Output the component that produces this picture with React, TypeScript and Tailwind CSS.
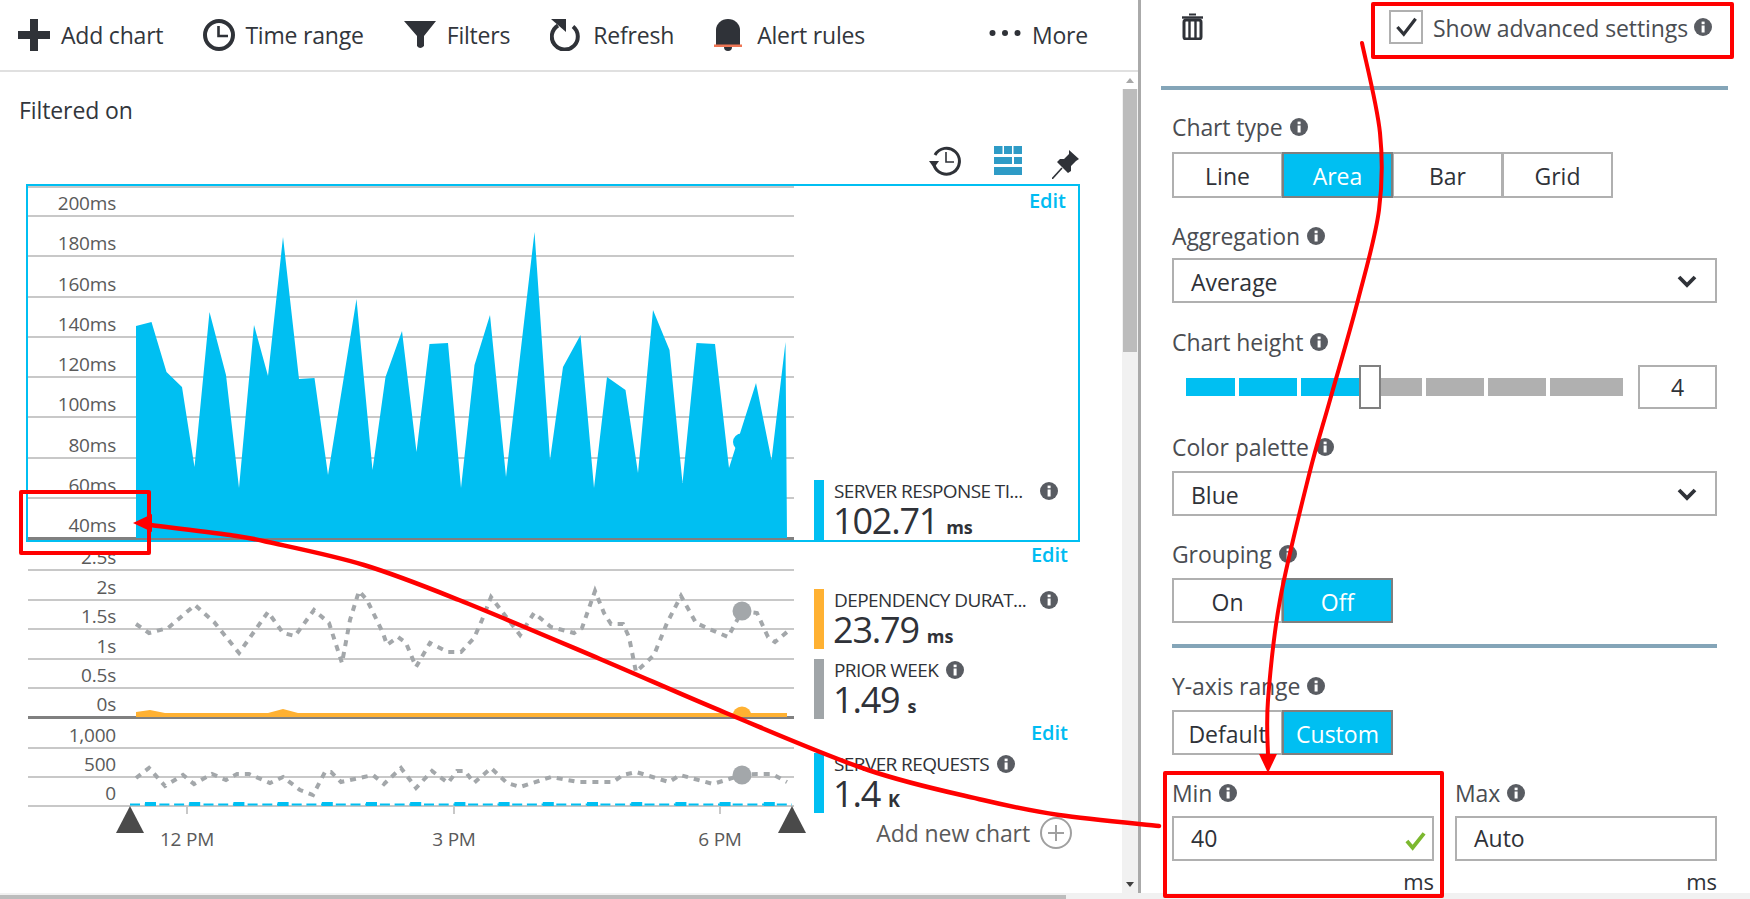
import type { ReactNode } from "react";

type Pt = [number, number];

const AREA: Pt[] = [
  [136, 326], [151.5, 322], [166.5, 372], [182, 387], [194.5, 467], [209.5, 312], [226, 375], [239, 488],
  [254, 325], [268, 376], [283, 237], [299, 379], [314.5, 378], [328, 475], [356.5, 299], [372.5, 470],
  [385.5, 377], [402, 331], [416.5, 452], [429.5, 344], [448, 343], [461, 488], [474.5, 365], [490, 315],
  [506, 477], [534.5, 232], [550, 460], [563, 367], [580.5, 335], [594, 488], [607, 377], [625.5, 390],
  [638, 473], [653, 310], [669.5, 350], [682.5, 483], [696.5, 343], [715, 344], [729, 468], [756, 383],
  [771.5, 460], [785.5, 342], [787, 538], [136, 538],
];

const DEPENDENCY_PRIOR: Pt[] = [
  [136, 624], [149, 633], [168, 628], [195, 605], [214, 622], [239, 653], [268, 612], [283, 633], [295, 636],
  [314, 610], [329, 623], [342, 663], [350, 620], [359, 591], [367, 600], [383, 633], [387, 645], [398, 637],
  [406, 643], [416, 667], [430, 643], [448, 652], [461, 652], [474, 638], [482, 620], [491, 597], [520, 635],
  [534, 613], [551, 627], [574, 633], [582, 628], [595, 591], [604, 613], [611, 624], [623, 624], [629, 637],
  [636, 672], [654, 655], [667, 623], [681, 596], [696, 623], [707, 628], [728, 637], [742, 611], [757, 613],
  [768, 637], [775, 642], [787, 632],
];

const REQUESTS_PRIOR: Pt[] = [
  [136, 778], [149, 768], [165, 786], [183, 775], [194, 784], [212, 774], [226, 780], [237, 774], [249, 774],
  [270, 783], [283, 777], [300, 790], [313, 795], [325, 772], [331, 772], [341, 782], [373, 775], [384, 784],
  [401, 768], [416, 788], [432, 771], [448, 783], [457, 771], [465, 771], [474, 783], [491, 768], [507, 783],
  [520, 787], [551, 777], [578, 782], [600, 782], [613, 782], [623, 775], [636, 772], [669, 782], [680, 775],
  [713, 784], [742, 775], [757, 774], [772, 774], [787, 782],
];

const ORANGE: Pt[] = [
  [136, 717], [136, 712], [150, 710], [165, 713], [268, 713], [283, 709], [298, 713], [787, 713], [787, 717],
];

const toLine = (pts: Pt[]) => pts.map((p) => p.join(",")).join(" ");

// catmull-rom through the points, for the hand drawn arrows
function smooth(pts: Pt[]) {
  let d = `M${pts[0][0]} ${pts[0][1]}`;
  for (let i = 0; i < pts.length - 1; i++) {
    const p0 = pts[Math.max(i - 1, 0)];
    const p1 = pts[i];
    const p2 = pts[i + 1];
    const p3 = pts[Math.min(i + 2, pts.length - 1)];
    d += ` C${p1[0] + (p2[0] - p0[0]) / 6} ${p1[1] + (p2[1] - p0[1]) / 6} ${p2[0] - (p3[0] - p1[0]) / 6} ${p2[1] - (p3[1] - p1[1]) / 6} ${p2[0]} ${p2[1]}`;
  }
  return d;
}

function Info({ className = "" }: { className?: string }) {
  return (
    <svg viewBox="0 0 18 18" className={`w-[18px] h-[18px] shrink-0 ${className}`}>
      <circle cx="9" cy="9" r="9" fill="#595c62" />
      <rect x="7.6" y="7.5" width="3" height="7" fill="#fff" />
      <rect x="7.6" y="3.6" width="3" height="2.6" fill="#fff" />
    </svg>
  );
}

function Chevron() {
  return (
    <svg viewBox="0 0 20 14" className="w-[20px] h-[14px] text-[#2f3238]">
      <path d="M2 3l8 8 8-8" fill="none" stroke="currentColor" strokeWidth="3.8" />
    </svg>
  );
}

function ToolItem({ icon, label }: { icon: ReactNode; label: string }) {
  return (
    <div className="flex items-center">
      {icon}
      <span className="text-[23px] leading-[30px] tracking-[-0.2px]">{label}</span>
    </div>
  );
}

function Toolbar() {
  return (
    <div className="h-[72px] border-b-2 border-[#e0e0e0] flex items-center pl-[18px] pr-[50px] text-[#32363c]">
      <div className="flex items-center gap-[40px]">
        <ToolItem
          label="Add chart"
          icon={
            <svg viewBox="0 0 32 32" className="w-[32px] h-[32px] mr-[11px]" fill="#2f3238">
              <rect x="12" y="0" width="8" height="32" />
              <rect x="0" y="12" width="32" height="8" />
            </svg>
          }
        />
        <ToolItem
          label="Time range"
          icon={
            <svg viewBox="0 0 32 32" className="w-[32px] h-[32px] mr-[10px]" fill="none" stroke="#2f3238">
              <circle cx="16" cy="16" r="14" strokeWidth="4" />
              <path d="M15.5 7v10H25" strokeWidth="2.6" />
            </svg>
          }
        />
        <ToolItem
          label="Filters"
          icon={
            <svg viewBox="0 0 32 28" className="w-[32px] h-[28px] mr-[11px]" fill="#2f3238">
              <path d="M0 0h32L20 15v10q-4 4-7 0V15z" />
            </svg>
          }
        />
        <ToolItem
          label="Refresh"
          icon={
            <svg viewBox="0 0 32 32" className="w-[32px] h-[32px] mr-[11px]" fill="none" stroke="#2f3238">
              <path d="M23 7.5A13 13 0 1 1 8 6.5" strokeWidth="4" />
              <path d="M1 0h15v13z" fill="#2f3238" stroke="none" />
            </svg>
          }
        />
        <ToolItem
          label="Alert rules"
          icon={
            <svg viewBox="0 0 28 32" className="w-[28px] h-[32px] mr-[15px]" fill="#2f3238">
              <path d="M2 26V11a12 11 0 0 1 24 0v15z" />
              <circle cx="14" cy="28" r="4" />
              <rect x="0" y="25.5" width="28" height="2.5" fill="#ee7655" />
            </svg>
          }
        />
      </div>
      <div className="ml-auto">
        <ToolItem
          label="More"
          icon={
            <svg viewBox="0 0 32 8" className="w-[32px] h-[8px] mr-[11px] -mt-[4px]" fill="#2f3238">
              <circle cx="3.5" cy="4" r="3" />
              <circle cx="16" cy="4" r="3" />
              <circle cx="28.5" cy="4" r="3" />
            </svg>
          }
        />
      </div>
    </div>
  );
}

function ViewIcons() {
  return (
    <div className="flex justify-end items-start h-[38px] mt-[21px] pr-[42px]">
      <svg viewBox="0 0 32 30" className="w-[32px] h-[30px]" fill="none" stroke="#2f3238">
        <path d="M5 19A13 13 0 1 0 6 9" strokeWidth="3" />
        <path d="M0 15h10l-5 7z" fill="#2f3238" stroke="none" />
        <path d="M17 6v10h8" strokeWidth="1.6" />
      </svg>
      <svg viewBox="0 0 28 29" className="w-[28px] h-[29px] ml-[33px]" fill="#2e9bc6">
        <rect x="0" y="0" width="8.5" height="8" />
        <rect x="10" y="0" width="8" height="8" />
        <rect x="19.5" y="0" width="8.5" height="8" />
        <rect x="0" y="11" width="18" height="7" />
        <rect x="20" y="11" width="8" height="7" />
        <rect x="0" y="21" width="28" height="8" />
      </svg>
      <svg viewBox="0 0 28 29" className="w-[28px] h-[29px] ml-[30px] mt-[4px]" fill="#2f3238">
        <path d="M17 0l10 9-3 2-5 5v5l-3 2L5 12l3-3h4l5-5z" />
        <path d="M0 29l10-11" stroke="#2f3238" strokeWidth="1.6" />
      </svg>
    </div>
  );
}

function Legend({
  color,
  label,
  value,
  unit,
  labelClass,
  infoClass = "",
}: {
  color: string;
  label: string;
  value: string;
  unit: string;
  labelClass: string;
  infoClass?: string;
}) {
  return (
    <div className="flex h-[60px] text-[#2f3238]">
      <div className={`w-[10px] ${color}`} />
      <div className="pl-[10px]">
        <div className="flex items-center h-[22px]">
          <span className={`text-[19px] leading-[22px] whitespace-nowrap tracking-[-0.6px] ${labelClass}`}>{label}</span>
          <Info className={infoClass} />
        </div>
        <div className="flex items-baseline leading-[38px] -ml-[1px]">
          <span className="text-[36px] font-medium tracking-[-1.2px]">{value}</span>
          <span className="text-[18px] font-bold ml-[8px]">{unit}</span>
        </div>
      </div>
    </div>
  );
}

function Edit() {
  return <div className="text-right text-[20px] leading-[24px] font-semibold text-[#00bcf2] pr-[12px]">Edit</div>;
}

function TickRow({ label, className }: { label: string; className: string }) {
  return (
    <div className={`flex items-end border-b-2 ${className}`}>
      <span className="w-[88px] text-right text-[19px] leading-[24px] tracking-[-0.2px] text-[#5a5a5a]">{label}</span>
    </div>
  );
}

function ResponseChart() {
  return (
    <div className="ml-[26px] w-[1054px] h-[358px] border-2 border-[#00bff2] flex">
      <div className="relative w-[766px] h-[354px]">
        <div className="h-[31px] flex items-end border-t-2 border-b-2 border-[#c8c8c8]">
          <span className="w-[88px] text-right text-[19px] leading-[24px] tracking-[-0.2px] text-[#5a5a5a]">200ms</span>
        </div>
        <TickRow label="180ms" className="h-[40.3px] border-[#c8c8c8]" />
        <TickRow label="160ms" className="h-[40.3px] border-[#c8c8c8]" />
        <TickRow label="140ms" className="h-[40.3px] border-[#c8c8c8]" />
        <TickRow label="120ms" className="h-[40.3px] border-[#c8c8c8]" />
        <TickRow label="100ms" className="h-[40.3px] border-[#c8c8c8]" />
        <TickRow label="80ms" className="h-[40.3px] border-[#c8c8c8]" />
        <TickRow label="60ms" className="h-[40.3px] border-[#c8c8c8]" />
        <TickRow label="40ms" className="h-[41px] border-b-[3px] border-[#808080]" />
        <svg viewBox="28 186 766 354" className="absolute inset-0 w-[766px] h-[354px]">
          <polygon points={toLine(AREA)} fill="#00bff2" />
          <circle cx="741.5" cy="442" r="8.5" fill="#00bff2" />
        </svg>
      </div>
      <div className="flex-1 flex flex-col justify-between pl-[20px] pt-[3px]">
        <Edit />
        <Legend
          color="bg-[#00bff2]"
          label="SERVER RESPONSE TI..."
          value="102.71"
          unit="ms"
          labelClass="w-[206px]"
        />
      </div>
    </div>
  );
}

function DependencyChart() {
  return (
    <div className="ml-[28px] w-[1052px] flex h-[177px]">
      <div className="relative w-[766px] h-[177px]">
        <TickRow label="2.5s" className="h-[29px] border-[#c8c8c8]" />
        <TickRow label="2s" className="h-[29.5px] border-[#c8c8c8]" />
        <TickRow label="1.5s" className="h-[29.5px] border-[#c8c8c8]" />
        <TickRow label="1s" className="h-[29.5px] border-[#c8c8c8]" />
        <TickRow label="0.5s" className="h-[29.5px] border-[#c8c8c8]" />
        <TickRow label="0s" className="h-[30px] border-b-[3px] border-[#808080]" />
        <svg viewBox="28 542 766 177" className="absolute inset-0 w-[766px] h-[177px]">
          <polyline points={toLine(DEPENDENCY_PRIOR)} fill="none" stroke="#a3a7aa" strokeWidth="4" strokeDasharray="6 6" />
          <circle cx="742" cy="611" r="9.5" fill="#a3a7aa" />
          <polygon points={toLine(ORANGE)} fill="#ffb132" />
          <path d="M732.5 716a9.5 9.5 0 0 1 19 0z" fill="#ffb132" />
        </svg>
      </div>
      <div className="flex-1 pl-[20px] pt-[1px]">
        <Edit />
        <div className="flex flex-col gap-[10px] mt-[22px]">
          <Legend
            color="bg-[#ffb132]"
            label="DEPENDENCY DURAT..."
            value="23.79"
            unit="ms"
            labelClass="w-[206px]"
          />
          <Legend
            color="bg-[#a0a5a8]"
            label="PRIOR WEEK"
            value="1.49"
            unit="s"
            labelClass=""
            infoClass="ml-[8px]"
          />
        </div>
      </div>
    </div>
  );
}

function RequestsChart() {
  return (
    <div className="ml-[28px] w-[1052px] flex h-[130px]">
      <div className="relative w-[766px] h-[130px]">
        <TickRow label="1,000" className="h-[30px] border-[#c8c8c8]" />
        <TickRow label="500" className="h-[29px] border-[#c8c8c8]" />
        <TickRow label="0" className="h-[29px] border-[#c8c8c8]" />
        <svg viewBox="28 719 790 130" className="absolute top-0 left-0 w-[790px] h-[130px]">
          <polyline points={toLine(REQUESTS_PRIOR)} fill="none" stroke="#a3a7aa" strokeWidth="4" strokeDasharray="6 6" />
          <circle cx="742" cy="775" r="9.5" fill="#a3a7aa" />
          <path d="M130 804.5H792" stroke="#00bff2" strokeWidth="2" strokeDasharray="10 4.7" />
          {Array.from({ length: 15 }, (_, i) => (
            <rect key={i} x={145 + i * 44.2} y={802} width={11} height={4} fill="#00bff2" />
          ))}
          <path d="M187 807v7M454 807v7M720 807v7" stroke="#c8c8c8" strokeWidth="2" />
          <polygon points="130,806 116,833 144,833" fill="#4a4a4a" />
          <polygon points="792,806 778,833 806,833" fill="#4a4a4a" />
        </svg>
        <span className="absolute left-[159px] top-[108px] -translate-x-1/2 text-[19px] leading-[24px] tracking-[-0.2px] text-[#5a5a5a]">12 PM</span>
        <span className="absolute left-[426px] top-[108px] -translate-x-1/2 text-[19px] leading-[24px] tracking-[-0.2px] text-[#5a5a5a]">3 PM</span>
        <span className="absolute left-[692px] top-[108px] -translate-x-1/2 text-[19px] leading-[24px] tracking-[-0.2px] text-[#5a5a5a]">6 PM</span>
      </div>
      <div className="flex-1 pl-[20px] pt-[2px]">
        <Edit />
        <div className="mt-[8px]">
          <Legend
            color="bg-[#00bff2]"
            label="SERVER REQUESTS"
            value="1.4"
            unit="K"
            labelClass=""
            infoClass="ml-[8px]"
          />
        </div>
        <div className="flex items-center justify-end mt-[4px] pr-[8px] h-[32px] text-[#5a5a5a]">
          <span className="text-[23px] font-medium leading-[30px] tracking-[-0.1px]">Add new chart</span>
          <svg viewBox="0 0 32 32" className="w-[32px] h-[32px] ml-[10px]" fill="none" stroke="#a0a0a0" strokeWidth="2">
            <circle cx="16" cy="16" r="15" />
            <path d="M16 8v16M8 16h16" />
          </svg>
        </div>
      </div>
    </div>
  );
}

function VerticalScrollbar() {
  return (
    <div className="w-[16px] bg-[#f1f1f1] flex flex-col items-center">
      <div className="h-[17px] w-full bg-white flex items-center justify-center">
        <svg viewBox="0 0 8 5" className="w-[8px] h-[5px]" fill="#a8a8a8">
          <path d="M4 0l4 5H0z" />
        </svg>
      </div>
      <div className="w-[14px] h-[263px] bg-[#bcbcbc]" />
      <div className="mt-auto h-[18px] flex items-center justify-center">
        <svg viewBox="0 0 8 5" className="w-[8px] h-[5px]" fill="#404040">
          <path d="M4 5l4-5H0z" />
        </svg>
      </div>
    </div>
  );
}

function Label({ text, className }: { text: string; className: string }) {
  return (
    <div className={`flex items-center h-[30px] gap-[7px] text-[#4a4d52] ${className}`}>
      <span className="text-[23px] leading-[30px] tracking-[-0.1px]">{text}</span>
      <Info />
    </div>
  );
}

function Segmented({ options, active, className, height }: { options: string[]; active: string; className: string; height: string }) {
  return (
    <div className={`flex ${className}`}>
      {options.map((o, i) => (
        <div
          key={o}
          className={`w-[111px] ${height} pt-[3px] flex items-center justify-center text-[23px] border-2 ${i > 0 ? "-ml-[1px]" : ""} ${
            o === active ? "relative bg-[#00bff2] border-[#7f7f7f] text-white" : "border-[#b0b0b0] text-[#2f3238]"
          }`}
        >
          {o}
        </div>
      ))}
    </div>
  );
}

function SelectBox({ value, className }: { value: string; className: string }) {
  return (
    <div className={`h-[45px] border-2 border-[#b0b0b0] flex items-center justify-between pl-[17px] pr-[18px] text-[23px] text-[#2f3238] ${className}`}>
      <span className="pt-[3px]">{value}</span>
      <Chevron />
    </div>
  );
}

function RangeField({ label, value, check, className }: { label: string; value: string; check?: boolean; className: string }) {
  return (
    <div className={`w-[262px] ${className}`}>
      <Label text={label} className="" />
      <div className="mt-[8px] h-[45px] border-2 border-[#b0b0b0] flex items-center justify-between pl-[17px] pr-[6px] text-[23px] text-[#2f3238]">
        <span>{value}</span>
        {check && (
          <svg viewBox="0 0 22 20" className="w-[21px] h-[20px] mt-[4px]" fill="none" stroke="#7cb82f" strokeWidth="4">
            <path d="M2 10l6 7L20 2" />
          </svg>
        )}
      </div>
      <div className="mt-[5px] h-[30px] text-right text-[22px] leading-[30px] text-[#2f3238]">ms</div>
    </div>
  );
}

function SettingsPanel() {
  return (
    <div className="w-[609px] pl-[31px]">
      <div className="h-[86px] flex items-start">
        <svg viewBox="0 0 21 27" className="w-[21px] h-[27px] ml-[10px] mt-[13px]" fill="none" stroke="#2f3238">
          <path d="M0 4.5h21" strokeWidth="2.4" />
          <path d="M7 1.5h7" strokeWidth="2" />
          <rect x="2" y="7" width="17" height="19" rx="2" strokeWidth="3" />
          <path d="M7.5 8v17M13.5 8v17" strokeWidth="2.4" />
        </svg>
        <div className="ml-[186px] mt-[10px] w-[34px] h-[34px] border-2 border-[#b0b0b0] flex items-center justify-center">
          <svg viewBox="0 0 24 22" className="w-[23px] h-[20px]" fill="none" stroke="#2f3238" strokeWidth="3.6">
            <path d="M2 11l7 8L22 2" />
          </svg>
        </div>
        <span className="ml-[10px] mt-[13px] text-[23px] leading-[30px] tracking-[-0.1px] text-[#4a4d52] whitespace-nowrap">Show advanced settings</span>
        <Info className="ml-[6px] mt-[18px]" />
      </div>
      <div className="h-[4px] w-[567px] -ml-[11px] bg-[#84a5b8]" />
      <div className="w-[545px]">
        <Label text="Chart type" className="mt-[22px]" />
        <Segmented options={["Line", "Area", "Bar", "Grid"]} active="Area" height="h-[46px]" className="mt-[10px]" />
        <Label text="Aggregation" className="mt-[23px]" />
        <SelectBox value="Average" className="mt-[7px]" />
        <Label text="Chart height" className="mt-[24px]" />
        <div className="mt-[8px] h-[44px] flex items-center">
          <div className="ml-[14px] w-[49px] h-[18px] bg-[#00bff2]" />
          <div className="ml-[4px] w-[58px] h-[18px] bg-[#00bff2]" />
          <div className="ml-[4px] w-[58px] h-[18px] bg-[#00bff2]" />
          <div className="w-[22px] h-[44px] border-2 border-[#808080] bg-white" />
          <div className="w-[41px] h-[18px] bg-[#b0b0b0]" />
          <div className="ml-[4px] w-[58px] h-[18px] bg-[#b0b0b0]" />
          <div className="ml-[4px] w-[58px] h-[18px] bg-[#b0b0b0]" />
          <div className="ml-[4px] w-[73px] h-[18px] bg-[#b0b0b0]" />
          <div className="ml-[15px] w-[79px] h-[44px] border-2 border-[#b0b0b0] flex items-center justify-center text-[23px] text-[#2f3238]">4</div>
        </div>
        <Label text="Color palette" className="mt-[23px]" />
        <SelectBox value="Blue" className="mt-[9px]" />
        <Label text="Grouping" className="mt-[23px]" />
        <Segmented options={["On", "Off"]} active="Off" height="h-[45px]" className="mt-[9px]" />
        <div className="mt-[21px] h-[4px] bg-[#84a5b8]" />
        <Label text="Y-axis range" className="mt-[23px]" />
        <Segmented options={["Default", "Custom"]} active="Custom" height="h-[45px]" className="mt-[9px]" />
        <div className="flex gap-[21px]">
          <RangeField label="Min" value="40" check className="mt-[23px]" />
          <RangeField label="Max" value="Auto" className="mt-[23px]" />
        </div>
      </div>
    </div>
  );
}

function Annotations() {
  const toMin: Pt[] = [[1362, 43], [1380, 133], [1379, 210], [1358, 300], [1330, 400], [1309, 475], [1280, 600], [1268, 700], [1268, 756]];
  const toAxis: Pt[] = [[1159, 826], [1059, 815], [983, 800], [868, 770], [726, 713], [600, 659], [459, 600], [364, 565], [268, 542], [230, 535], [150, 525]];
  return (
    <>
      <div className="absolute left-[1371px] top-[2px] w-[363px] h-[57px] border-4 border-[#ff0000] rounded-[2px]" />
      <div className="absolute left-[19px] top-[490px] w-[132px] h-[65px] border-4 border-[#ff0000] rounded-[2px]" />
      <div className="absolute left-[1163px] top-[771px] w-[281px] h-[127px] border-4 border-[#ff0000] rounded-[2px]" />
      <svg viewBox="0 0 1750 899" className="absolute inset-0 w-[1750px] h-[899px] pointer-events-none">
        <path d={smooth(toMin)} fill="none" stroke="#ff0000" strokeWidth="4" strokeLinecap="round" />
        <polygon points="1259,754 1277,754 1268,773" fill="#ff0000" />
        <path d={smooth(toAxis)} fill="none" stroke="#ff0000" strokeWidth="4.5" strokeLinecap="round" />
        <polygon points="133,523 152,514 152,532" fill="#ff0000" />
      </svg>
    </>
  );
}

export default function App() {
  return (
    <div className="relative w-[1750px] h-[899px] overflow-hidden bg-white font-['Open_Sans',sans-serif] flex flex-col">
      <div className="flex h-[893px]">
        <div className="w-[1138px] flex flex-col">
          <Toolbar />
          <div className="flex-1 flex min-h-0">
            <div className="w-[1122px]">
              <div className="pl-[19px] pt-[23px] text-[23px] leading-[30px] tracking-[-0.1px] text-[#32363c]">Filtered on</div>
              <ViewIcons />
              <ResponseChart />
              <DependencyChart />
              <RequestsChart />
            </div>
            <VerticalScrollbar />
          </div>
        </div>
        <div className="w-[3px] bg-[#aaaaaa]" />
        <SettingsPanel />
      </div>
      <div className="h-[6px] bg-[#f1f1f1] pt-[2px]">
        <div className="w-[1066px] h-[4px] bg-[#bcbcbc]" />
      </div>
      <Annotations />
    </div>
  );
}
